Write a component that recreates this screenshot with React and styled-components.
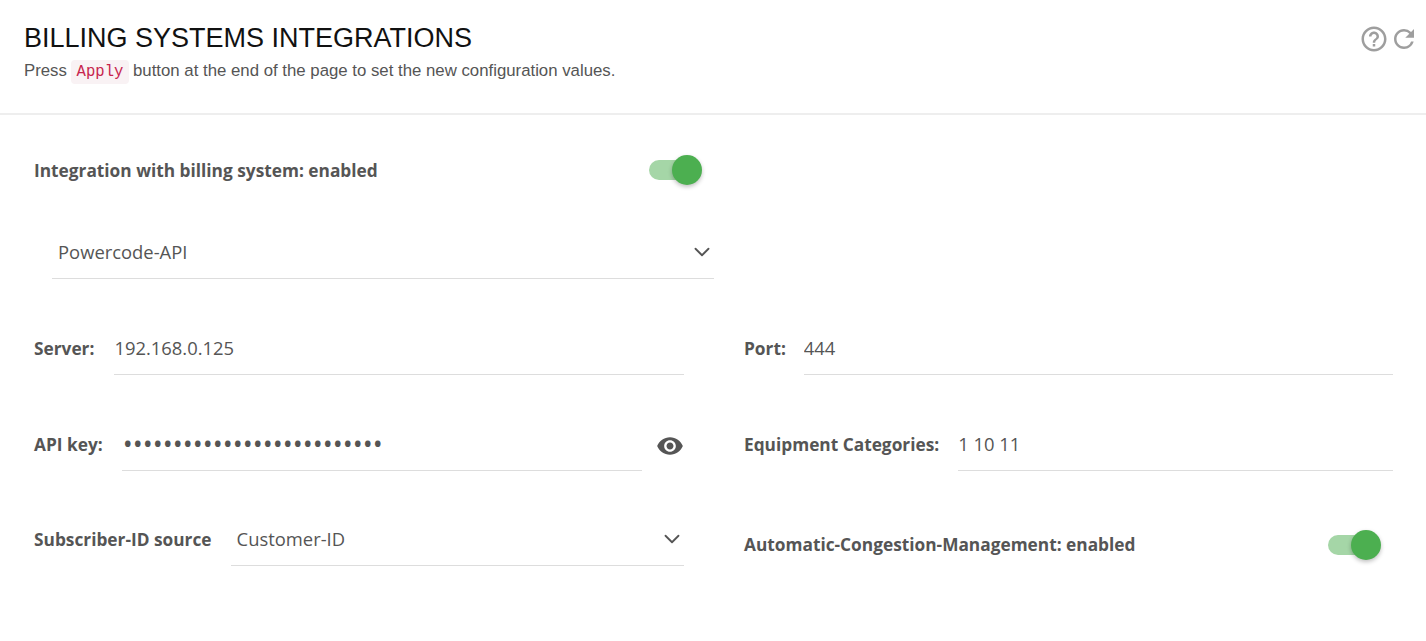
import React from "react";
import styled, { createGlobalStyle } from "styled-components";
import { MdHelpOutline, MdRefresh, MdVisibility } from "react-icons/md";
import { ChevronDown } from "lucide-react";

const GlobalStyle = createGlobalStyle`
  html, body {
    margin: 0;
    padding: 0;
    background: #fff;
  }
`;

function Toggle() {
  return (
    <Switch>
      <Track />
      <Thumb />
    </Switch>
  );
}

function Select({ value }) {
  return (
    <SelectBox>
      <SelectValue>{value}</SelectValue>
      <Chevron size={26} strokeWidth={1.7} />
    </SelectBox>
  );
}

export default function App() {
  return (
    <Page>
      <GlobalStyle />
      <Header>
        <div>
          <Title>BILLING SYSTEMS INTEGRATIONS</Title>
          <Subtitle>
            Press <Code>Apply</Code> button at the end of the page to set the new configuration values.
          </Subtitle>
        </div>
        <HeaderIcons>
          <MdHelpOutline size={30} />
          <MdRefresh size={30} />
        </HeaderIcons>
      </Header>
      <Content>
        <ToggleRow>
          <Label>Integration with billing system: enabled</Label>
          <Toggle />
        </ToggleRow>
        <TypeSelect>
          <Select value="Powercode-API" />
        </TypeSelect>
        <Grid>
          <Field>
            <Label $gap={20}>Server:</Label>
            <TextInput readOnly value="192.168.0.125" />
          </Field>
          <Field>
            <Label>Port:</Label>
            <TextInput readOnly value="444" />
          </Field>
          <Field>
            <Label $gap={19}>API key:</Label>
            <PasswordInput type="password" readOnly value="abcdefghijklmnopqrstuvwxyz" />
            <EyeButton>
              <MdVisibility size={28} />
            </EyeButton>
          </Field>
          <Field>
            <Label $gap={19}>Equipment Categories:</Label>
            <TextInput readOnly value="1 10 11" />
          </Field>
          <Field>
            <Label $gap={19}>Subscriber-ID source</Label>
            <Select value="Customer-ID" />
          </Field>
          <ToggleField>
            <Label>Automatic-Congestion-Management: enabled</Label>
            <Toggle />
          </ToggleField>
        </Grid>
      </Content>
    </Page>
  );
}

const Page = styled.div`
  width: 100%;
  height: 641px;
  overflow: hidden;
  background: #fff;
  color: #555;
  font-family: "Open Sans", "Noto Sans", sans-serif;
`;
const Header = styled.header`
  height: 115px;
  box-sizing: border-box;
  padding: 22px 7px 0 24px;
  display: flex;
  justify-content: space-between;
  align-items: flex-start;
  border-bottom: 2px solid #eeeeee;
`;
const Title = styled.h1`
  margin: 0;
  font-family: "Liberation Sans", Arial, sans-serif;
  font-size: 27px;
  line-height: 32px;
  font-weight: 400;
  color: #111;
`;
const Subtitle = styled.p`
  margin: 5px 0 0;
  font-family: "Liberation Sans", Arial, sans-serif;
  font-size: 16.8px;
  line-height: 24px;
  color: #555;
`;
const Code = styled.code`
  display: inline-block;
  padding: 0 6px;
  margin: 0 -1px;
  border-radius: 4px;
  background: #f9f2f4;
  color: #c7254e;
  font-family: "Liberation Mono", monospace;
  font-size: 15.6px;
  line-height: 24px;
`;
const HeaderIcons = styled.div`
  display: flex;
  align-items: center;
  margin-top: 2px;
  color: #9e9e9e;
`;
const Content = styled.main`
  padding: 0 33px 0 34px;
`;
const ToggleRow = styled.div`
  width: 650px;
  height: 110px;
  display: flex;
  align-items: center;
  justify-content: space-between;
`;
const Label = styled.label`
  flex: none;
  margin-right: ${(p) => p.$gap || 18}px;
  font-size: 17.3px;
  font-weight: 700;
  color: #555;
  white-space: nowrap;
`;
const Switch = styled.div`
  position: relative;
  flex: none;
  width: 53px;
  height: 30px;
  margin-right: -18px;
`;
const Track = styled.div`
  position: absolute;
  left: 0;
  top: 5px;
  width: 48px;
  height: 20px;
  border-radius: 10px;
  background: #a5d6a7;
`;
const Thumb = styled.div`
  position: absolute;
  left: 23px;
  top: 0;
  width: 30px;
  height: 30px;
  border-radius: 50%;
  background: #4caf50;
  box-shadow: 0 2px 4px rgba(0, 0, 0, 0.25);
`;
const TypeSelect = styled.div`
  width: 662px;
  height: 54px;
  margin-left: 18px;
  display: flex;
`;
const SelectBox = styled.div`
  flex: 1;
  min-width: 0;
  height: 54px;
  box-sizing: border-box;
  padding: 0 0 1px 6px;
  display: flex;
  align-items: center;
  justify-content: space-between;
  border-bottom: 1px solid #dddddd;
  color: #555;
`;
const SelectValue = styled.span`
  font-size: 18.4px;
`;
const Chevron = styled(ChevronDown)`
  flex: none;
  margin: 2px -1px 0 0;
`;
const Grid = styled.div`
  display: grid;
  grid-template-columns: 650px 649px;
  grid-template-rows: 96px 95px 96px;
  column-gap: 60px;
  margin-top: 42px;
`;
const Field = styled.div`
  display: flex;
  align-items: center;
  box-sizing: border-box;
  height: 54px;
`;
const ToggleField = styled(Field)`
  justify-content: space-between;
  padding: 11px 30px 0 0;
`;
const TextInput = styled.input`
  flex: 1;
  min-width: 0;
  height: 54px;
  box-sizing: border-box;
  padding: 0;
  border: 0;
  border-bottom: 1px solid #dddddd;
  outline: none;
  background: transparent;
  color: #555;
  font-family: inherit;
  font-size: 18.4px;
`;
const PasswordInput = styled(TextInput)`
  padding-left: 1px;
  font-size: 26.6px;
`;
const EyeButton = styled.div`
  flex: none;
  display: flex;
  margin: 3px 0 0 14px;
  color: #555;
`;
